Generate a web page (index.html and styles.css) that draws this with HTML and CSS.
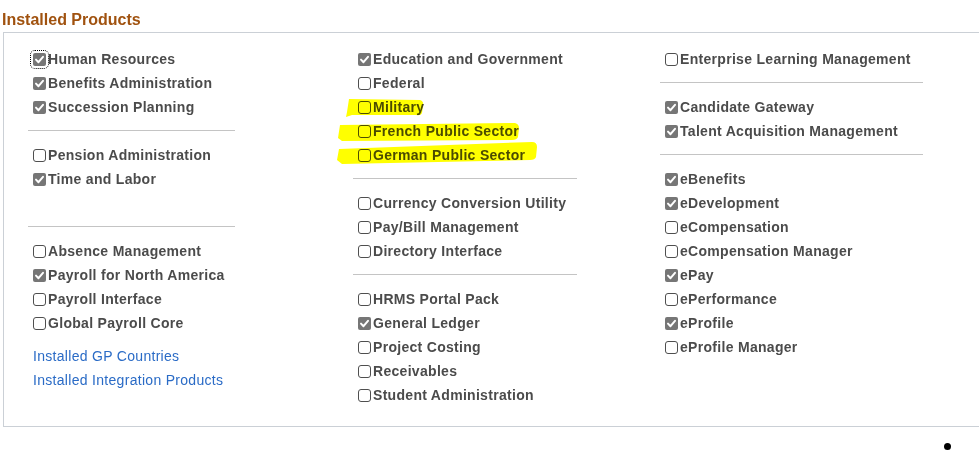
FILE: index.html
```html
<!DOCTYPE html>
<html>
<head>
<meta charset="utf-8">
<link rel="stylesheet" href="styles.css">
</head>
<body>
<h1 class="title">Installed Products</h1>
<div class="panel">
  <div class="col c1">
    <div class="item"><span class="cb on focus"><svg viewBox="0 0 13 13"><polyline points="3,6.6 5.5,9.2 10,3.8"/></svg></span>Human Resources</div>
    <div class="item"><span class="cb on"><svg viewBox="0 0 13 13"><polyline points="3,6.6 5.5,9.2 10,3.8"/></svg></span>Benefits Administration</div>
    <div class="item"><span class="cb on"><svg viewBox="0 0 13 13"><polyline points="3,6.6 5.5,9.2 10,3.8"/></svg></span>Succession Planning</div>
    <div class="sep"></div>
    <div class="item"><span class="cb"></span>Pension Administration</div>
    <div class="item"><span class="cb on"><svg viewBox="0 0 13 13"><polyline points="3,6.6 5.5,9.2 10,3.8"/></svg></span>Time and Labor</div>
    <div class="blank"></div>
    <div class="sep"></div>
    <div class="item"><span class="cb"></span>Absence Management</div>
    <div class="item"><span class="cb on"><svg viewBox="0 0 13 13"><polyline points="3,6.6 5.5,9.2 10,3.8"/></svg></span>Payroll for North America</div>
    <div class="item"><span class="cb"></span>Payroll Interface</div>
    <div class="item"><span class="cb"></span>Global Payroll Core</div>
    <div class="links">
      <a href="#">Installed GP Countries</a>
      <a href="#">Installed Integration Products</a>
    </div>
  </div>
  <div class="col c2">
    <div class="item"><span class="cb on"><svg viewBox="0 0 13 13"><polyline points="3,6.6 5.5,9.2 10,3.8"/></svg></span>Education and Government</div>
    <div class="item"><span class="cb"></span>Federal</div>
    <div class="item"><span class="cb"></span>Military</div>
    <div class="item"><span class="cb"></span>French Public Sector</div>
    <div class="item"><span class="cb"></span>German Public Sector</div>
    <div class="sep"></div>
    <div class="item"><span class="cb"></span>Currency Conversion Utility</div>
    <div class="item"><span class="cb"></span>Pay/Bill Management</div>
    <div class="item"><span class="cb"></span>Directory Interface</div>
    <div class="sep"></div>
    <div class="item"><span class="cb"></span>HRMS Portal Pack</div>
    <div class="item"><span class="cb on"><svg viewBox="0 0 13 13"><polyline points="3,6.6 5.5,9.2 10,3.8"/></svg></span>General Ledger</div>
    <div class="item"><span class="cb"></span>Project Costing</div>
    <div class="item"><span class="cb"></span>Receivables</div>
    <div class="item"><span class="cb"></span>Student Administration</div>
  </div>
  <div class="col c3">
    <div class="item"><span class="cb"></span>Enterprise Learning Management</div>
    <div class="sep"></div>
    <div class="item"><span class="cb on"><svg viewBox="0 0 13 13"><polyline points="3,6.6 5.5,9.2 10,3.8"/></svg></span>Candidate Gateway</div>
    <div class="item"><span class="cb on"><svg viewBox="0 0 13 13"><polyline points="3,6.6 5.5,9.2 10,3.8"/></svg></span>Talent Acquisition Management</div>
    <div class="sep"></div>
    <div class="item"><span class="cb on"><svg viewBox="0 0 13 13"><polyline points="3,6.6 5.5,9.2 10,3.8"/></svg></span>eBenefits</div>
    <div class="item"><span class="cb on"><svg viewBox="0 0 13 13"><polyline points="3,6.6 5.5,9.2 10,3.8"/></svg></span>eDevelopment</div>
    <div class="item"><span class="cb"></span>eCompensation</div>
    <div class="item"><span class="cb"></span>eCompensation Manager</div>
    <div class="item"><span class="cb on"><svg viewBox="0 0 13 13"><polyline points="3,6.6 5.5,9.2 10,3.8"/></svg></span>ePay</div>
    <div class="item"><span class="cb"></span>ePerformance</div>
    <div class="item"><span class="cb on"><svg viewBox="0 0 13 13"><polyline points="3,6.6 5.5,9.2 10,3.8"/></svg></span>eProfile</div>
    <div class="item"><span class="cb"></span>eProfile Manager</div>
  </div>
</div>
<div class="foot"><span class="dot"></span></div>
<svg class="marker" viewBox="0 0 979 450" width="979" height="450">
  <path d="M349 99 L420 100 Q424 101 423 106 L422 113 Q421 116 416 115 L352 115 L346 117 L347 112 Z"/>
  <path d="M340 125 L515 123 Q519 124 519 128 L518 137 Q517 140 512 140 L342 141 L338 138 Z"/>
  <path d="M339 149 L532 142 Q537 142 537 147 L536 157 Q535 160 530 160 L342 164 L337 160 Z"/>
</svg>
</body>
</html>
```
FILE: styles.css
```css
html, body {
  margin: 0;
  padding: 0;
  background: #ffffff;
}
body {
  font-family: "Liberation Sans", Arial, sans-serif;
  position: relative;
  overflow: hidden;
  width: 979px;
  height: 450px;
}
.title {
  margin: 10px 0 2px 2px;
  font-size: 16px;
  line-height: 20px;
  font-weight: bold;
  color: #a0520f;
}
.panel {
  margin-left: 3px;
  border-left: 1px solid #cbd0d6;
  border-top: 1px solid #cbd0d6;
  border-bottom: 1px solid #cbd0d6;
  padding: 14px 0 19px 24px;
  display: grid;
  grid-template-columns: 325px 307px 1fr;
  align-items: start;
}
.col {
  display: flex;
  flex-direction: column;
}
.item {
  display: flex;
  align-items: center;
  height: 24px;
  padding-left: 5px;
  font-size: 14px;
  font-weight: bold;
  letter-spacing: 0.3px;
  color: #4b4b4b;
  white-space: nowrap;
}
.cb {
  box-sizing: border-box;
  width: 13px;
  height: 13px;
  flex: none;
  margin-right: 2px;
  border: 1px solid #4f4f4f;
  border-radius: 3px;
  background: #fff;
  display: flex;
}
.cb.on {
  border: none;
  border-radius: 2px;
  background: #767676;
}
.cb svg {
  width: 13px;
  height: 13px;
}
.cb svg polyline {
  fill: none;
  stroke: #ffffff;
  stroke-width: 2;
  stroke-linecap: round;
  stroke-linejoin: round;
}
.cb.focus {
  outline: 1px dotted #000;
  outline-offset: 2px;
}
.blank {
  height: 24px;
}
.sep {
  height: 24px;
  box-sizing: border-box;
  padding-top: 11px;
}
.sep::before {
  content: "";
  display: block;
  height: 1px;
  background: #c4c4c4;
}
.c1 .sep { width: 207px; }
.c2 .sep { width: 224px; }
.c3 .sep { width: 263px; }
.links {
  margin-top: 9px;
  padding-left: 5px;
}
.links a {
  display: block;
  height: 24px;
  line-height: 24px;
  font-size: 14px;
  letter-spacing: 0.3px;
  color: #2a6bc6;
  text-decoration: none;
}
.foot {
  padding: 16px 0 0 944px;
}
.dot {
  display: block;
  width: 7px;
  height: 7px;
  border-radius: 50%;
  background: #000;
}
.marker {
  position: absolute;
  left: 0;
  top: 0;
  pointer-events: none;
  mix-blend-mode: multiply;
}
.marker path {
  fill: #ffff00;
}
```
